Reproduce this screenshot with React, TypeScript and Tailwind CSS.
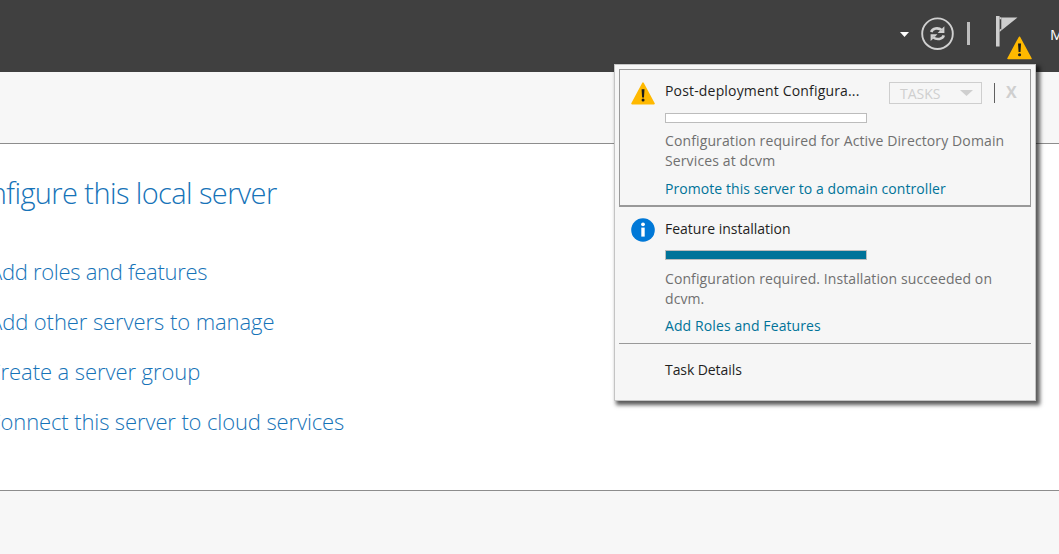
import type { ReactNode } from 'react';

function WarningIcon({ className }: { className: string }) {
  return (
    <svg viewBox="0 0 24 23" className={className} aria-hidden="true">
      <path d="M12 1.2 23 21.6H1Z" fill="#ffb900" stroke="#ffb900" strokeWidth="1.6" strokeLinejoin="round" />
      <path d="M10.6 7.2h2.9l-.5 8.2h-1.9Z" fill="#1b1b1b" />
      <circle cx="12.05" cy="18" r="1.5" fill="#1b1b1b" />
    </svg>
  );
}

function InfoIcon() {
  return (
    <svg viewBox="0 0 24 24" className="h-6 w-6" aria-hidden="true">
      <circle cx="12" cy="12" r="11.8" fill="#0078d7" />
      <circle cx="12" cy="6.3" r="1.9" fill="#fff" />
      <path d="M10.3 9.6h3.4v9h-3.4Z" fill="#fff" />
    </svg>
  );
}

function RefreshIcon() {
  return (
    <svg viewBox="0 0 34 34" className="h-[34px] w-[34px]" fill="none" aria-hidden="true">
      <circle cx="16.5" cy="16.7" r="15.3" stroke="#d0d0d0" strokeWidth="1.9" />
      <g stroke="#d0d0d0" strokeWidth="2.6">
        <path d="M10.2 15C11.4 11.2 17 10 21 13.2" />
        <path d="M22.8 18.4C21.6 22.2 16 23.4 12 20.2" />
      </g>
      <path d="M23.4 9.3v6.8h-6.8l2.3-2.4h2.2v-2.2Z M9.6 24.1v-6.8h6.8l-2.3 2.4h-2.2v2.2Z" fill="#d0d0d0" />
    </svg>
  );
}

function FlagIcon() {
  return (
    <svg viewBox="0 0 22 31" className="h-[31px] w-[22px]" aria-hidden="true">
      <path d="M0 0h3.6v30.4H0Z M5.3 1.4h16.2L5.3 14.6Z" fill="#cecece" />
      <path d="M3.6 1.2h1.7v2H3.6Z M3.6 13.8l1.7-1.3v2.1l-1.7 1.4Z" fill="#cecece" />
    </svg>
  );
}

function Header() {
  return (
    <header className="flex h-[72px] bg-[#404040]">
      <div className="ml-[900px] mt-8 w-[9px]">
        <svg viewBox="0 0 9 5" className="h-[5px] w-[9px]" aria-hidden="true">
          <path d="M0 0h9L4.5 5Z" fill="#fff" />
        </svg>
      </div>
      <div className="ml-3 mt-[17px]">
        <RefreshIcon />
      </div>
      <div className="ml-[12px] mt-[22px] h-[23px] w-[3px] bg-[#bdbdbd]" />
      <div className="relative ml-[26px] mt-4 w-[22px]">
        <FlagIcon />
        <WarningIcon className="absolute left-[11px] top-5 h-6 w-[25px]" />
      </div>
      <div className="ml-[32px] mt-[24px] w-[9px] overflow-hidden whitespace-nowrap text-[15px] leading-5 text-white">Manage</div>
    </header>
  );
}

function Progress({ full }: { full?: boolean }) {
  return (
    <div className="h-[10px] w-[202px] border border-[#bcbcbc] bg-white">
      <div className={full ? 'h-full w-full bg-[#007399]' : 'h-full w-0'} />
    </div>
  );
}

function Line({ className, children }: { className: string; children: ReactNode }) {
  return <div className={`whitespace-nowrap ${className}`}>{children}</div>;
}

function Notifications() {
  return (
    <section className="absolute left-[614px] top-[64px] h-[337px] w-[422px] border border-[#c4c4c4] bg-[#f6f6f6] px-1 pt-1 text-[14px] leading-5 shadow-[3px_3px_4px_1px_rgba(0,0,0,0.65)]">
      <article className="flex h-[138px] border border-b-2 border-[#999]">
        <WarningIcon className="ml-[11px] mt-[12px] h-[23px] w-6" />
        <div className="ml-[10px] pt-[11px]">
          <div className="flex h-[32px]">
            <Line className="w-[224px] text-[#1f1f1f] tracking-[0.17px]">Post-deployment Configura...</Line>
            <div className="mt-px flex h-[22px] w-[93px] items-center justify-between border border-[#cecece] pl-[10px] pr-[8px] text-[#cfcfcf]">
              <span className="pt-px">TASKS</span>
              <svg viewBox="0 0 13 6" className="h-[6px] w-[13px]" aria-hidden="true">
                <path d="M0 0h13L6.5 6Z" fill="#cfcfcf" />
              </svg>
            </div>
            <div className="ml-3 mt-[2px] h-5 w-px bg-[#606060]" />
            <div className="ml-[11px] text-[16px] font-bold leading-[22px] text-[#cfcfcf]">X</div>
          </div>
          <Progress />
          <div className="mt-2 text-[#707070] tracking-[0.12px]">
            <Line className="">Configuration required for Active Directory Domain</Line>
            <Line className="">Services at dcvm</Line>
          </div>
          <Line className="mt-2 text-[#007399] tracking-[0.07px]">Promote this server to a domain controller</Line>
        </div>
      </article>
      <article className="flex h-[137px] border-b border-[#999] pl-px">
        <div className="ml-[11px] mt-[11px]">
          <InfoIcon />
        </div>
        <div className="ml-[10px] pt-[12px]">
          <Line className="mb-[11px] text-[#1f1f1f]">Feature installation</Line>
          <Progress full />
          <div className="mt-[9px] text-[#707070] tracking-[0.09px]">
            <Line className="">Configuration required. Installation succeeded on</Line>
            <Line className="">dcvm.</Line>
          </div>
          <Line className="mt-[7px] text-[#007399] tracking-[0.1px]">Add Roles and Features</Line>
        </div>
      </article>
      <Line className="ml-[46px] mt-[16px] text-[#1f1f1f] tracking-[-0.08px]">Task Details</Line>
    </section>
  );
}

export default function App() {
  return (
    <div className="relative h-[554px] w-[1059px] overflow-hidden bg-[#f7f7f7] font-['Open_Sans','Noto_Sans',sans-serif]">
      <Header />
      <main className="mt-[71px] h-[348px] overflow-hidden border-y border-[#8d8d8d] bg-white font-light text-[#1673b8]">
        <h1 className="-ml-[44px] mt-[29px] whitespace-nowrap text-[29px] leading-[40px] tracking-[-0.6px]">Configure this local server</h1>
        <nav className="mt-[33px] whitespace-nowrap text-[22px] leading-[50px]">
          <div className="-ml-[11px] tracking-[-0.29px]">Add roles and features</div>
          <div className="-ml-[11px] tracking-[-0.08px]">Add other servers to manage</div>
          <div className="-ml-[13px] tracking-[-0.08px]">Create a server group</div>
          <div className="-ml-[13px] tracking-[-0.12px]">Connect this server to cloud services</div>
        </nav>
      </main>
      <Notifications />
    </div>
  );
}
